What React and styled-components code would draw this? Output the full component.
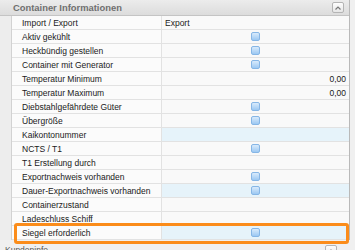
import React from "react";
import styled, { createGlobalStyle } from "styled-components";

const GlobalStyle = createGlobalStyle`
  html, body {
    margin: 0;
    padding: 0;
    background: #f0f0f0;
    overflow: hidden;
  }
  body {
    font-family: "Liberation Sans", Arial, sans-serif;
  }
`;

const rows = [
  { label: "Import / Export", value: "Export" },
  { label: "Aktiv gekühlt", check: true },
  { label: "Heckbündig gestellen", check: true },
  { label: "Container mit Generator", check: true },
  { label: "Temperatur Minimum", value: "0,00", num: true },
  { label: "Temperatur Maximum", value: "0,00", num: true },
  { label: "Diebstahlgefährdete Güter", check: true },
  { label: "Übergröße", check: true },
  { label: "Kaikontonummer", blue: true },
  { label: "NCTS / T1", check: true },
  { label: "T1 Erstellung durch" },
  { label: "Exportnachweis vorhanden", check: true },
  { label: "Dauer-Exportnachweis vorhanden", check: true, blue: true },
  { label: "Containerzustand" },
  { label: "Ladeschluss Schiff" },
  { label: "Siegel erforderlich", check: true, blue: true, marked: true },
];

const Page = styled.div`
  width: 355px;
  height: 250px;
  overflow: hidden;
  display: flex;
  flex-direction: column;
`;

const Panel = styled.div`
  width: 349px;
  border-right: 1px solid #b9b9b9;
  background: #f4f4f4;
`;

const Header = styled.div`
  height: 15px;
  display: flex;
  align-items: center;
  justify-content: space-between;
  padding: 0 5px 0 13px;
  background: linear-gradient(#ececec, #dcdcdc);
  border-bottom: 1px solid #c4c4c4;
  color: #6f6f6f;
  font-size: 9.4px;
  font-weight: bold;
`;

const SubHeader = styled.div`
  width: 349px;
  height: 15px;
  box-sizing: border-box;
  display: flex;
  align-items: flex-start;
  justify-content: space-between;
  padding: 5px 12px 0 5px;
  font-size: 8.5px;
  color: #555;
`;

const Toggle = styled.div`
  width: 12px;
  height: 11px;
  box-sizing: border-box;
  border: 1px solid #b4b4b4;
  border-radius: 2px;
  background: linear-gradient(#fdfdfd, #e6e6e6);
  display: flex;
  align-items: center;
  justify-content: center;
`;

const Body = styled.div`
  display: flex;
`;

const Gutter = styled.div`
  width: 11px;
  background: #ededed;
  border-right: 1px solid #d2d2d2;
`;

const Grid = styled.div`
  flex: 1;
  display: grid;
  grid-template-columns: 150px 1fr;
  position: relative;
  background: #fafafa;
`;

const Cell = styled.div`
  height: 13px;
  border-bottom: 1px solid #e2e2e2;
  display: flex;
  align-items: center;
  font-size: 8.5px;
  color: #1a1a1a;
  white-space: nowrap;
  overflow: hidden;
`;

const Label = styled(Cell)`
  padding-left: 10px;
  border-right: 1px solid #e2e2e2;
  background: #fbfbfb;
`;

const Value = styled(Cell)`
  padding: 0 3px;
  justify-content: ${(p) => (p.$center ? "center" : p.$num ? "flex-end" : "flex-start")};
  background: ${(p) => (p.$blue ? "#e6f3fa" : "#f9f9f9")};
`;

const Check = styled.span`
  width: 9px;
  height: 9px;
  box-sizing: border-box;
  border: 1px solid #86b6e6;
  border-radius: 2px;
  background: linear-gradient(#d9ebfc, #9cc8f2);
  margin-left: -1px;
`;

const Marker = styled.div`
  position: absolute;
  left: 2px;
  right: 0;
  top: 207px;
  height: 21px;
  box-sizing: border-box;
  border: 3px solid #fb8c1a;
  border-radius: 3px;
  pointer-events: none;
`;

const Chevron = () => (
  <svg width="6" height="4" viewBox="0 0 6 4">
    <path d="M0.5 3.5 L3 1 L5.5 3.5" fill="none" stroke="#777" strokeWidth="1.2" />
  </svg>
);

export default function App() {
  return (
    <Page>
      <GlobalStyle />
      <Panel>
        <Header>
          <span>Container Informationen</span>
          <Toggle>
            <Chevron />
          </Toggle>
        </Header>
        <Body>
          <Gutter />
          <Grid>
            {rows.map((r) => (
              <React.Fragment key={r.label}>
                <Label>{r.label}</Label>
                <Value $blue={r.blue} $center={r.check} $num={r.num}>
                  {r.check ? <Check /> : r.value}
                </Value>
              </React.Fragment>
            ))}
            <Marker />
          </Grid>
        </Body>
      </Panel>
      <SubHeader>
        <span>Kundeninfo</span>
        <Toggle>
          <Chevron />
        </Toggle>
      </SubHeader>
    </Page>
  );
}
